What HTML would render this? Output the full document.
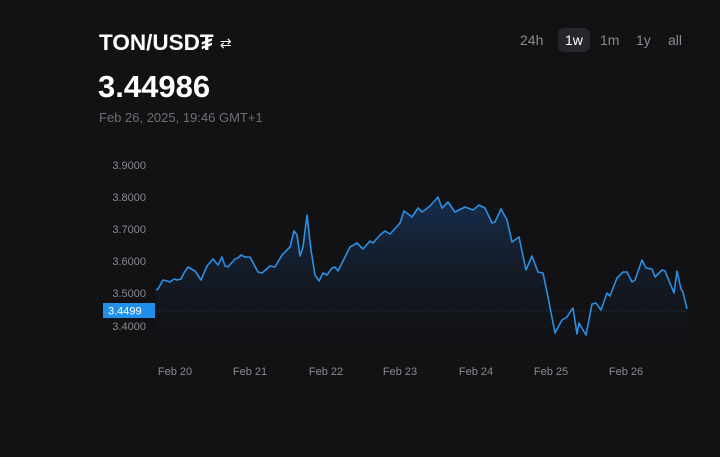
<!DOCTYPE html>
<html><head><meta charset="utf-8"><style>
body{margin:0;width:720px;height:457px;background:#121214;font-family:"Liberation Sans",sans-serif;overflow:hidden;position:relative}
.t{position:absolute;white-space:nowrap}
</style></head><body>
<div class="t" style="left:99px;top:30px;font-size:22.5px;font-weight:bold;color:#fff">TON/USD₮ <span style="font-size:14px;font-weight:normal;position:relative;top:-2px">⇄</span></div>
<div class="t" style="left:98px;top:69px;font-size:31px;font-weight:bold;color:#fff">3.44986</div>
<div class="t" style="left:99px;top:110px;font-size:13px;color:#6e6e73">Feb 26, 2025, 19:46 GMT+1</div>
<div style="position:absolute;left:558px;top:28px;width:32px;height:24px;background:#27272b;border-radius:6px"></div>
<div class="t" style="left:520px;top:32px;font-size:14px;color:#8a8a8f">24h</div>
<div class="t" style="left:565px;top:32px;font-size:14px;color:#fff">1w</div>
<div class="t" style="left:600px;top:32px;font-size:14px;color:#8a8a8f">1m</div>
<div class="t" style="left:636px;top:32px;font-size:14px;color:#8a8a8f">1y</div>
<div class="t" style="left:668px;top:32px;font-size:14px;color:#8a8a8f">all</div>
<svg width="720" height="457" style="position:absolute;left:0;top:0">
<defs><linearGradient id="g" x1="0" y1="0" x2="0" y2="1"><stop offset="0" stop-color="#1a3d6e" stop-opacity=".65"/><stop offset="1" stop-color="#121214" stop-opacity=".2"/></linearGradient></defs>
<g font-family="Liberation Sans" font-size="11" fill="#8a8a8f" text-anchor="end">
<text x="146" y="169">3.9000</text><text x="146" y="201">3.8000</text><text x="146" y="233">3.7000</text><text x="146" y="265">3.6000</text><text x="146" y="297">3.5000</text><text x="146" y="330">3.4000</text>
</g>
<g font-family="Liberation Sans" font-size="11" fill="#8a8a8f" text-anchor="middle">
<text x="175" y="375">Feb 20</text><text x="250" y="375">Feb 21</text><text x="326" y="375">Feb 22</text><text x="400" y="375">Feb 23</text><text x="476" y="375">Feb 24</text><text x="551" y="375">Feb 25</text><text x="626" y="375">Feb 26</text>
</g>
<polygon fill="url(#g)" points="156,348 156,290 158,289 163,280 167,281 170,282 174,279 177,280 181,279 184,273 188,267 195,271 201,280 207,266 213,259 218,265 222,257 225,266 228,267 235,259 238,258 241,255 245,257 250,257 258,272 262,273 270,266 275,267 282,255 287,250 290,247 294,231 297,235 300,256 303,247 307,215 311,250 315,275 319,281 323,273 327,275 332,268 335,267 338,271 350,247 357,243 363,249 370,241 373,243 380,235 385,231 390,234 400,223 404,211 412,217 418,208 422,212 430,206 438,197 442,208 448,202 455,212 465,207 473,210 479,205 485,208 492,223 495,222 501,209 507,220 512,242 519,237 526,270 532,256 538,272 543,273 548,297 555,333 562,320 567,317 570,312 573,308 577,334 579,323 586,335 592,304 596,303 601,310 607,293 610,296 617,278 623,272 627,272 632,282 635,280 642,260 646,268 652,269 655,277 662,270 665,271 674,293 677,271 681,289 683,292 687,309 687,348"/>
<line x1="156" y1="311" x2="687" y2="311" stroke="#2a3d55" stroke-dasharray="1 2"/>
<polyline fill="none" stroke="#2b8fe3" stroke-width="1.6" stroke-linejoin="round" points="156,290 158,289 163,280 167,281 170,282 174,279 177,280 181,279 184,273 188,267 195,271 201,280 207,266 213,259 218,265 222,257 225,266 228,267 235,259 238,258 241,255 245,257 250,257 258,272 262,273 270,266 275,267 282,255 287,250 290,247 294,231 297,235 300,256 303,247 307,215 311,250 315,275 319,281 323,273 327,275 332,268 335,267 338,271 350,247 357,243 363,249 370,241 373,243 380,235 385,231 390,234 400,223 404,211 412,217 418,208 422,212 430,206 438,197 442,208 448,202 455,212 465,207 473,210 479,205 485,208 492,223 495,222 501,209 507,220 512,242 519,237 526,270 532,256 538,272 543,273 548,297 555,333 562,320 567,317 570,312 573,308 577,334 579,323 586,335 592,304 596,303 601,310 607,293 610,296 617,278 623,272 627,272 632,282 635,280 642,260 646,268 652,269 655,277 662,270 665,271 674,293 677,271 681,289 683,292 687,309"/>
<rect x="103" y="303" width="52" height="15" fill="#1f8fea"/>
<text x="108" y="314.5" font-family="Liberation Sans" font-size="11" fill="#fff">3.4499</text>
</svg>
</body></html>
